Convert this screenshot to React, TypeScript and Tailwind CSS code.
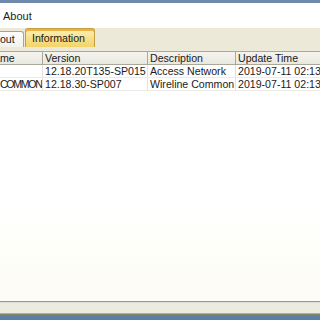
import React from "react";

const font = { fontFamily: '"Liberation Sans", Arial, sans-serif' };

function Row({ c1, c2, c3, c4, c1Class = "" }: { c1: string; c2: string; c3: string; c4: string; c1Class?: string }) {
  return (
    <div className="flex h-[13px] border-b border-[#ecebe6] text-[10.6px] leading-[13px] text-[#1a1a1a] whitespace-nowrap">
      <div className="w-[43px] shrink-0 overflow-hidden border-r border-[#e2e1dc]">
        <span className={`block ${c1Class}`}>{c1}</span>
      </div>
      <div className="w-[105px] shrink-0 overflow-hidden border-r border-[#e2e1dc] pl-[2px]">{c2}</div>
      <div className="w-[88px] shrink-0 overflow-hidden border-r border-[#e2e1dc] pl-[2px]">{c3}</div>
      <div className="flex-1 overflow-hidden pl-[2px]">{c4}</div>
    </div>
  );
}

export default function App() {
  return (
    <div className="w-[320px] h-[320px] overflow-hidden flex flex-col bg-white" style={font}>
      <div className="h-[3px] bg-[#6f8aac] shrink-0" />
      <div className="h-[25px] shrink-0 bg-white flex items-center pl-[3px] pt-[2px] text-[11px] text-[#1e1e1e]">
        About
      </div>
      <div className="h-[20px] shrink-0 bg-[#ece9d8] flex items-end relative">
        <div className="h-[16px] w-[24px] overflow-hidden border border-l-0 border-b-0 border-[#9ea4a8] rounded-tr-[3px] bg-gradient-to-b from-[#fefefe] to-[#f2f1ea] text-[10.6px] leading-[15px] text-[#1a1a1a] whitespace-nowrap mb-[1px]">
          <span className="block ml-[-13px]">About</span>
        </div>
        <div className="ml-[1px] h-[19px] w-[70px] border border-b-0 border-[#c4a045] rounded-t-[3px] bg-gradient-to-b from-[#fdf2b8] via-[#f8e08a] to-[#f3d46a] text-[10.6px] leading-[18px] text-[#1a1a1a] pl-[6px] shadow-[inset_0_2px_0_#f0b040] mb-[1px]">
          Information
        </div>
      </div>
      <div className="h-[3px] shrink-0 bg-[#ece9d8]" />
      <div className="flex h-[14px] shrink-0 border-t border-b border-[#aca899] bg-gradient-to-b from-[#f4f3ee] to-[#e9e8e0] text-[10.6px] leading-[12px] text-[#1a1a1a] whitespace-nowrap">
        <div className="w-[43px] shrink-0 overflow-hidden border-r border-[#aca899]">
          <span className="block ml-[-13.5px]">Name</span>
        </div>
        <div className="w-[105px] shrink-0 overflow-hidden border-r border-[#aca899] pl-[2px]">Version</div>
        <div className="w-[88px] shrink-0 overflow-hidden border-r border-[#aca899] pl-[2px]">Description</div>
        <div className="flex-1 overflow-hidden pl-[2px]">Update Time</div>
      </div>
      <Row c1="" c2="12.18.20T135-SP015" c3="Access Network" c4="2019-07-11 02:13:45" />
      <Row c1="COMMON" c1Class="tracking-[-1.3px]" c2="12.18.30-SP007" c3="Wireline Common" c4="2019-07-11 02:13:46" />
      <div className="flex-1 bg-gradient-to-b from-white via-white to-[#fdfdf5]" />
      <div className="h-[1px] shrink-0 bg-[#9a9a96]" />
      <div className="h-[1px] shrink-0 bg-[#dcdcd6]" />
      <div className="h-[10px] shrink-0 bg-[#ecebdf]" />
      <div className="h-[1px] shrink-0 bg-[#b3b092]" />
      <div className="h-[1px] shrink-0 bg-[#86846a]" />
      <div className="h-[5px] shrink-0 bg-[#5b80a5]" />
    </div>
  );
}
